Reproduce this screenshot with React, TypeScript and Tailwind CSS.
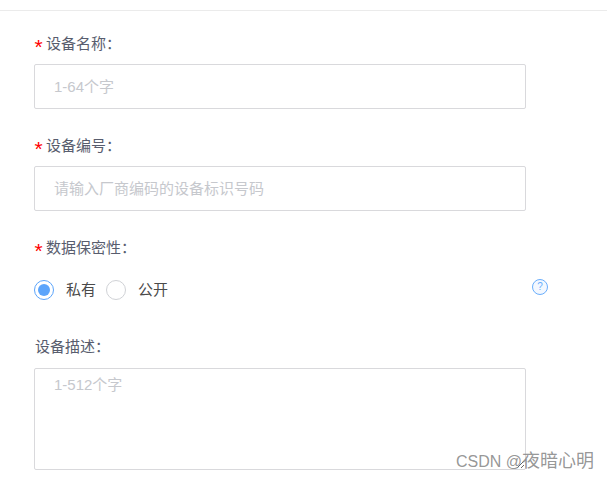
const font = '[font-family:"Liberation_Sans","Noto_Sans_CJK_SC",sans-serif]';

const FormLabel = ({ text, required = true }: { text: string; required?: boolean }) => (
  <div className="flex h-5 items-center">
    {required && <span className="mr-[3px] w-[9px] pt-[5px] text-center text-[21px] leading-none text-[#ff0000]">*</span>}
    <span className={required ? 'text-[15px] text-[#585d6e]' : 'ml-px text-[15px] text-[#585d6e]'}>{text}</span>
  </div>
);

const TextInput = ({ placeholder }: { placeholder: string }) => (
  <input
    placeholder={placeholder}
    className="mt-[10px] block h-[45px] w-[492px] rounded-[2px] border border-[#d9d9dc] bg-white px-[19px] text-[15px] outline-none placeholder:text-[#c6c8cd]"
  />
);

const Radio = ({ label, checked = false }: { label: string; checked?: boolean }) => (
  <div className="flex items-center">
    <span
      className={
        checked
          ? 'flex h-5 w-5 items-center justify-center rounded-full border border-[#5ba4fb]'
          : 'flex h-5 w-5 items-center justify-center rounded-full border border-[#d0d2d6]'
      }
    >
      {checked && <span className="h-3 w-3 rounded-full bg-[#5ba4fb]" />}
    </span>
    <span className="ml-3 text-[15px] text-[#4a4a4a]">{label}</span>
  </div>
);

export default function App() {
  return (
    <div className={`relative h-[479px] w-[607px] overflow-hidden bg-white ${font}`}>
      <div className="mt-[10px] border-t border-[#ebebeb] px-[34px] pt-[23px]">
        <FormLabel text="设备名称：" />
        <TextInput placeholder="1-64个字" />

        <div className="mt-[27px]">
          <FormLabel text="设备编号：" />
          <TextInput placeholder="请输入厂商编码的设备标识号码" />
        </div>

        <div className="mt-[27px]">
          <FormLabel text="数据保密性：" />
        </div>
        <div className="mt-[21px] flex w-[514px] items-center justify-between">
          <div className="flex items-center gap-[10px]">
            <Radio label="私有" checked />
            <Radio label="公开" />
          </div>
          <span className="mb-[6px] flex h-4 w-4 items-center justify-center rounded-full border border-[#6aaefc] bg-[#f3f8ff] text-[10px] leading-none text-[#6aaefc]">
            ?
          </span>
        </div>

        <div className="mt-[36px]">
          <FormLabel text="设备描述：" required={false} />
        </div>
        <textarea
          placeholder="1-512个字"
          className="mt-[10px] block h-[102px] w-[492px] rounded-[2px] border border-[#d9d9dc] bg-white px-[19px] py-[5px] text-[15px] outline-none placeholder:text-[#c6c8cd]"
        />
      </div>

      {/* CSDN watermark over the form */}
      <span className="absolute left-[456px] top-[450px] text-[16px] leading-[22px] text-[#8a8a8a]/90">
        CSDN @<span className="text-[18px]">夜暗心明</span>
      </span>
    </div>
  );
}
